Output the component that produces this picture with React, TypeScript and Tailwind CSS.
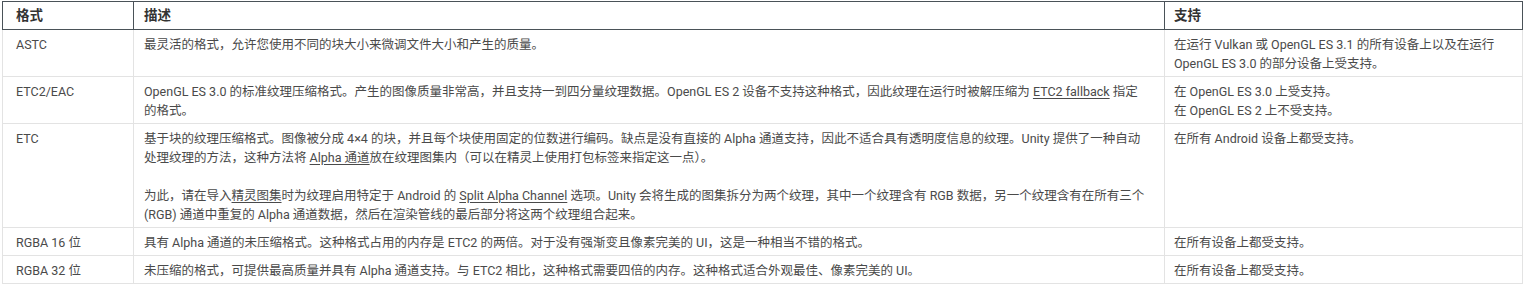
import * as React from "react";

const font = {
  fontFamily: 'Roboto, "Noto Sans CJK SC", sans-serif',
};

function U({ children }: { children: React.ReactNode }) {
  return <span className="underline underline-offset-2">{children}</span>;
}

const rows: { fmt: string; desc: React.ReactNode; support: React.ReactNode }[] = [
  {
    fmt: "ASTC",
    desc: "最灵活的格式，允许您使用不同的块大小来微调文件大小和产生的质量。",
    support: (
      <>
        在运行 Vulkan 或 OpenGL ES 3.1 的所有设备上以及在运行
        <br />
        OpenGL ES 3.0 的部分设备上受支持。
      </>
    ),
  },
  {
    fmt: "ETC2/EAC",
    desc: (
      <>
        OpenGL ES 3.0 的标准纹理压缩格式。产生的图像质量非常高，并且支持一到四分量纹理数据。OpenGL ES 2
        设备不支持这种格式，因此纹理在运行时被解压缩为 <U>ETC2 fallback</U> 指定
        <br />
        的格式。
      </>
    ),
    support: (
      <>
        在 OpenGL ES 3.0 上受支持。
        <br />
        在 OpenGL ES 2 上不受支持。
      </>
    ),
  },
  {
    fmt: "ETC",
    desc: (
      <>
        <p>
          基于块的纹理压缩格式。图像被分成 4×4 的块，并且每个块使用固定的位数进行编码。缺点是没有直接的 Alpha
          通道支持，因此不适合具有透明度信息的纹理。Unity 提供了一种自动
          <br />
          处理纹理的方法，这种方法将 <U>Alpha 通道</U>放在纹理图集内（可以在精灵上使用打包标签来指定这一点）。
        </p>
        <p className="mt-[19px]">
          为此，请在导入<U>精灵图集</U>时为纹理启用特定于 Android 的 <U>Split Alpha Channel</U> 选项。Unity
          会将生成的图集拆分为两个纹理，其中一个纹理含有 RGB 数据，另一个纹理含有在所有三个
          <br />
          (RGB) 通道中重复的 Alpha 通道数据，然后在渲染管线的最后部分将这两个纹理组合起来。
        </p>
      </>
    ),
    support: "在所有 Android 设备上都受支持。",
  },
  {
    fmt: "RGBA 16 位",
    desc: "具有 Alpha 通道的未压缩格式。这种格式占用的内存是 ETC2 的两倍。对于没有强渐变且像素完美的 UI，这是一种相当不错的格式。",
    support: "在所有设备上都受支持。",
  },
  {
    fmt: "RGBA 32 位",
    desc: "未压缩的格式，可提供最高质量并具有 Alpha 通道支持。与 ETC2 相比，这种格式需要四倍的内存。这种格式适合外观最佳、像素完美的 UI。",
    support: "在所有设备上都受支持。",
  },
];

export default function App() {
  return (
    <div className="h-[286px] w-[1530px] bg-white pt-px pl-[2px]" style={font}>
      <table className="w-[1521px] table-fixed border-collapse text-[12.5px] leading-[19px] text-[#4a4a4a]">
        <colgroup>
          <col className="w-[131px]" />
          <col className="w-[1031px]" />
          <col />
        </colgroup>
        <thead>
          <tr className="text-left text-[13.5px] leading-[18px] font-bold text-[#333]">
            <th className="border border-[#4a5258] pt-[4px] pb-[5px] pl-[13px] font-bold">格式</th>
            <th className="border border-[#4a5258] pt-[4px] pb-[5px] pl-[10px] font-bold">描述</th>
            <th className="border border-[#4a5258] pt-[4px] pb-[5px] pl-[9px] font-bold">支持</th>
          </tr>
        </thead>
        <tbody>
          {rows.map((r) => (
            <tr key={r.fmt} className="align-top">
              <td className="border border-[#e3e3e3] pt-[5px] pb-[3px] pl-[13px]">{r.fmt}</td>
              <td className="border border-[#e3e3e3] pt-[5px] pb-[3px] pl-[10px] pr-2">{r.desc}</td>
              <td className="border border-[#e3e3e3] pt-[5px] pb-[3px] pl-[9px] pr-2">{r.support}</td>
            </tr>
          ))}
        </tbody>
      </table>
    </div>
  );
}
